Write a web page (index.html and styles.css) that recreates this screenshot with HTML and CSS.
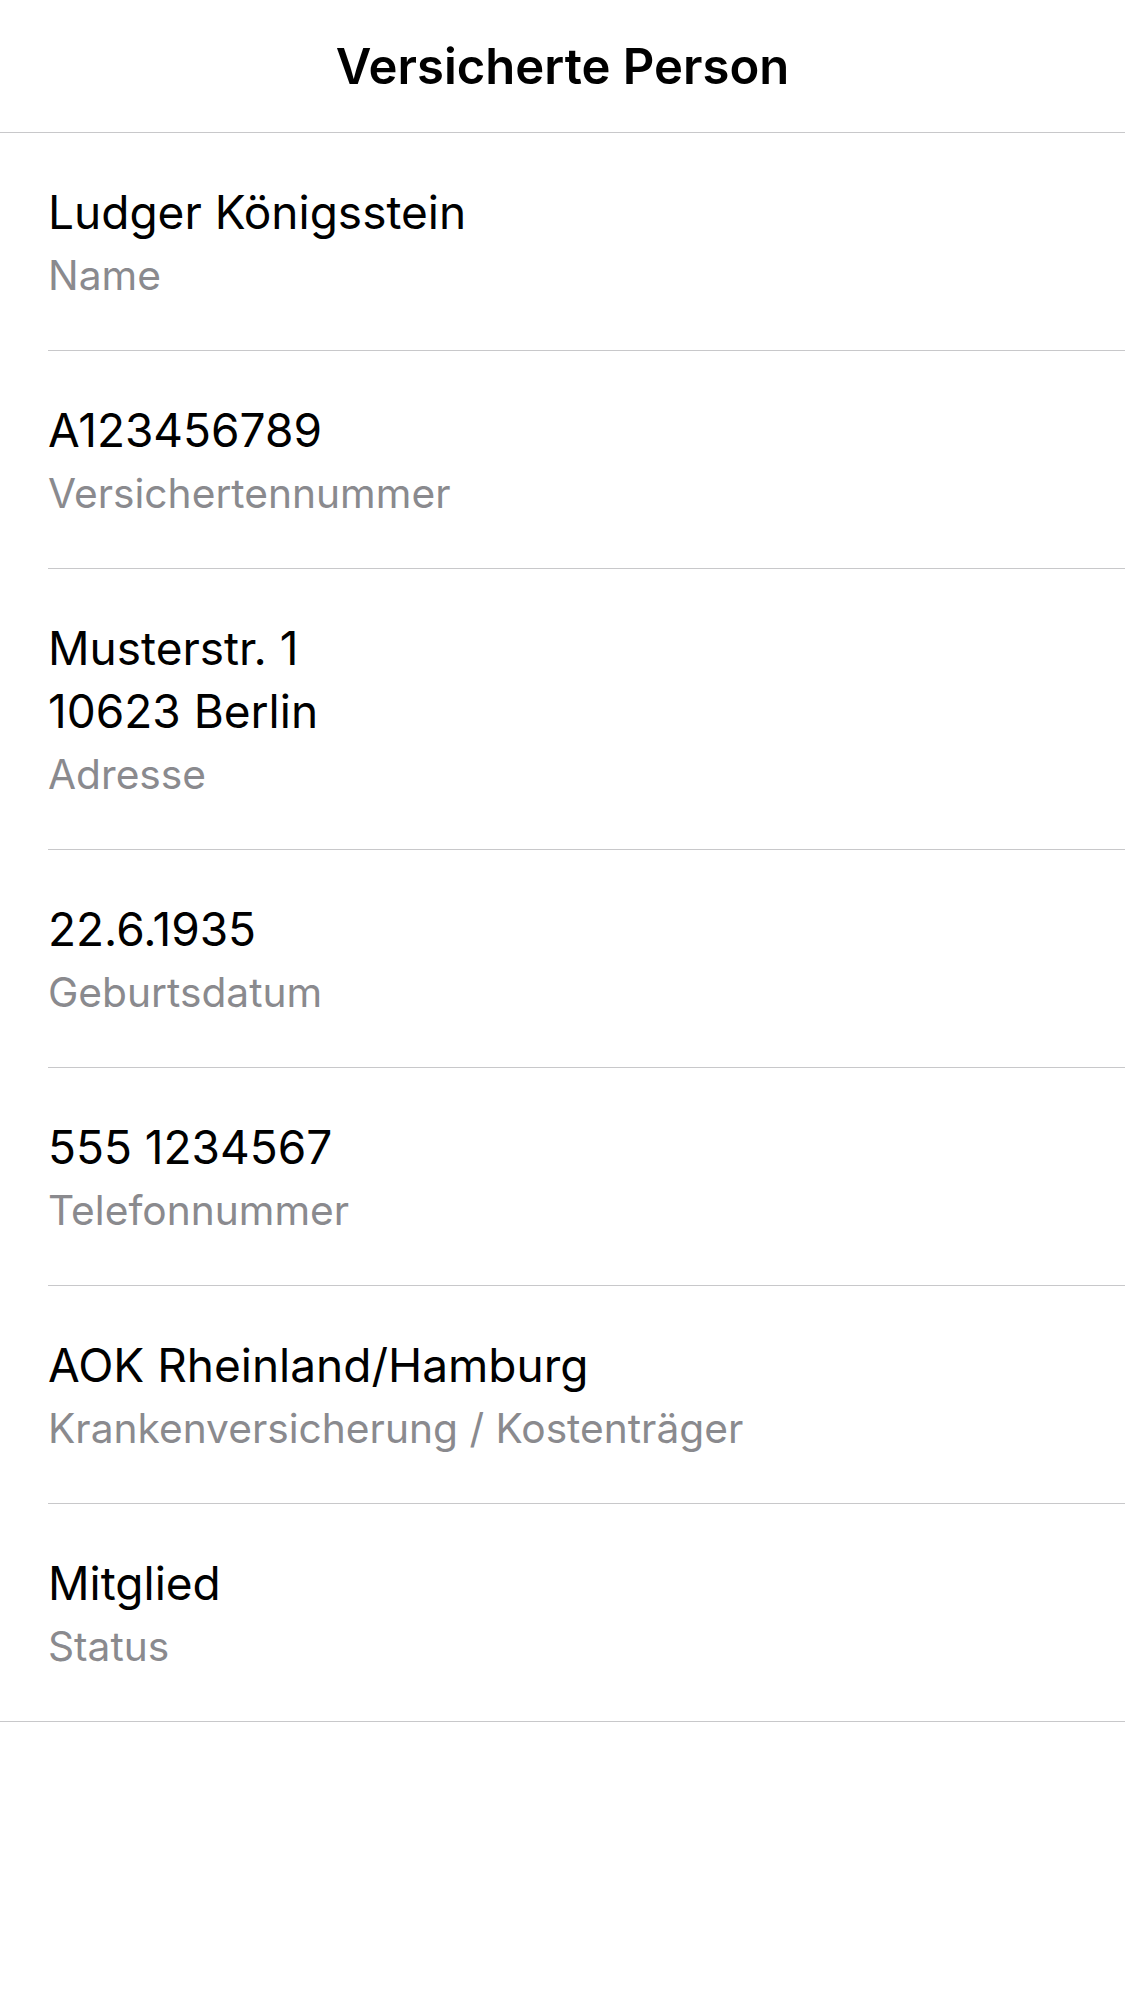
FILE: index.html
```html
<!DOCTYPE html>
<html lang="de">
<head>
<meta charset="utf-8">
<title>Versicherte Person</title>
<link rel="stylesheet" href="styles.css">
</head>
<body>
<header class="navbar">
  <h1 class="navbar-title">Versicherte Person</h1>
</header>
<main class="list">
  <div class="row">
    <div class="row-inner">
      <div class="value">Ludger Königsstein</div>
      <div class="label">Name</div>
    </div>
  </div>
  <div class="row">
    <div class="row-inner">
      <div class="value">A123456789</div>
      <div class="label">Versichertennummer</div>
    </div>
  </div>
  <div class="row">
    <div class="row-inner">
      <div class="value">Musterstr. 1<br>10623 Berlin</div>
      <div class="label">Adresse</div>
    </div>
  </div>
  <div class="row">
    <div class="row-inner">
      <div class="value">22.6.1935</div>
      <div class="label">Geburtsdatum</div>
    </div>
  </div>
  <div class="row">
    <div class="row-inner">
      <div class="value">555 1234567</div>
      <div class="label">Telefonnummer</div>
    </div>
  </div>
  <div class="row">
    <div class="row-inner">
      <div class="value">AOK Rheinland/Hamburg</div>
      <div class="label">Krankenversicherung / Kostenträger</div>
    </div>
  </div>
  <div class="row row-last">
    <div class="row-inner">
      <div class="value">Mitglied</div>
      <div class="label">Status</div>
    </div>
  </div>
</main>
</body>
</html>
```
FILE: styles.css
```css
html, body {
  margin: 0;
  padding: 0;
  background: #ffffff;
}
body {
  font-family: Inter, "Noto Sans", "Liberation Sans", sans-serif;
  color: #000000;
  -webkit-font-smoothing: antialiased;
}
.navbar {
  height: 133px;
  box-sizing: border-box;
  display: flex;
  align-items: center;
  justify-content: center;
  border-bottom: 1px solid #c8c8ca;
}
.navbar-title {
  margin: 0;
  font-size: 49px;
  font-weight: 600;
  letter-spacing: 0;
  padding-top: 1px;
}
.list {
  display: flex;
  flex-direction: column;
}
.row {
  padding-left: 48px;
}
.row-inner {
  padding: 48px 0 46px;
  border-bottom: 1px solid #c8c8ca;
}
.row-last {
  padding-left: 0;
}
.row-last .row-inner {
  padding-left: 48px;
}
.value {
  font-size: 46px;
  line-height: 62.5px;
  letter-spacing: 0;
}
.label {
  margin-top: 4.6px;
  font-size: 40.7px;
  line-height: 56px;
  color: #8a8a8e;
  letter-spacing: 0;
}
```
